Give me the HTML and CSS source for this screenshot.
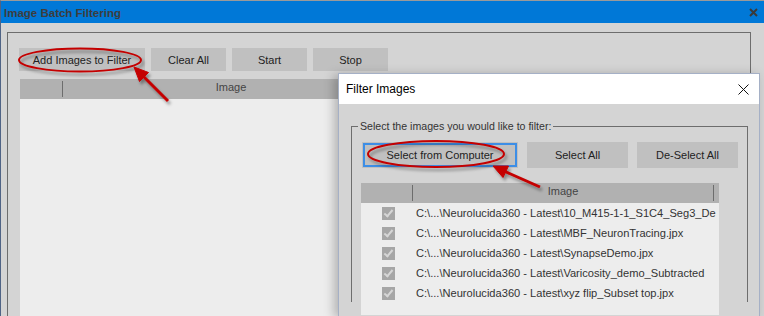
FILE: index.html
```html
<!DOCTYPE html>
<html lang="en">
<head>
    <meta charset="UTF-8">
    <title>Image Batch Filtering</title>
    <link rel="stylesheet" href="styles.css">
</head>
<body>
    <!-- Main window -->
    <div class="window">
        <div class="titlebar">
            <span class="title">Image Batch Filtering</span>
            <svg class="main-close" width="9" height="9" viewBox="0 0 9 9">
                <path d="M1 1L8 8M8 1L1 8" stroke="#3a3a3a" stroke-width="2"/>
            </svg>
        </div>
        <div class="client">
            <div class="group">
                <div class="btn-row">
                    <button class="btn btn-add">Add Images to Filter</button>
                    <button class="btn btn-small">Clear All</button>
                    <button class="btn btn-small">Start</button>
                    <button class="btn btn-small">Stop</button>
                </div>
                <div class="grid main-grid">
                    <div class="grid-head">
                        <div class="col-check"></div>
                        <div class="col-image">Image</div>
                    </div>
                    <div class="grid-body"></div>
                </div>
            </div>
        </div>
    </div>

    <!-- Filter Images dialog -->
    <div class="dialog">
        <div class="dialog-title">
            <span>Filter Images</span>
            <svg width="11" height="11" viewBox="0 0 11 11">
                <path d="M0.5 0.5L10.5 10.5M10.5 0.5L0.5 10.5" stroke="#111" stroke-width="1"/>
            </svg>
        </div>
        <div class="dialog-body">
            <fieldset class="dlg-group">
                <legend>Select the images you would like to filter:</legend>
                <div class="btn-row dlg-btns">
                    <button class="btn btn-select focused">Select from Computer</button>
                    <button class="btn btn-mid">Select All</button>
                    <button class="btn btn-mid">De-Select All</button>
                </div>
                <div class="grid dlg-grid">
                    <div class="grid-head">
                        <div class="col-check"></div>
                        <div class="col-image">Image</div>
                        <div class="col-rest"></div>
                    </div>
                    <div class="grid-body">
                        <div class="row"><span class="check"></span><span class="path">C:\...\Neurolucida360 - Latest\10_M415-1-1_S1C4_Seg3_De</span></div>
                        <div class="row"><span class="check"></span><span class="path">C:\...\Neurolucida360 - Latest\MBF_NeuronTracing.jpx</span></div>
                        <div class="row"><span class="check"></span><span class="path">C:\...\Neurolucida360 - Latest\SynapseDemo.jpx</span></div>
                        <div class="row"><span class="check"></span><span class="path">C:\...\Neurolucida360 - Latest\Varicosity_demo_Subtracted</span></div>
                        <div class="row"><span class="check"></span><span class="path">C:\...\Neurolucida360 - Latest\xyz flip_Subset top.jpx</span></div>
                    </div>
                </div>
            </fieldset>
        </div>
    </div>

    <!-- Red callouts drawn on top of the screenshot -->
    <svg class="callouts" width="764" height="316" viewBox="0 0 764 316">
        <defs>
            <filter id="shade" x="-20%" y="-20%" width="140%" height="160%">
                <feDropShadow dx="2" dy="3" stdDeviation="1.5" flood-color="#000" flood-opacity="0.35"/>
            </filter>
        </defs>
        <g filter="url(#shade)" fill="none" stroke="#c40000" stroke-width="2">
            <ellipse cx="80" cy="60" rx="61" ry="11.5"/>
            <ellipse cx="436" cy="154" rx="68" ry="13"/>
        </g>
        <g filter="url(#shade)" stroke="#c40000" stroke-width="3" fill="#c40000">
            <line x1="168" y1="101" x2="143" y2="76"/>
            <polygon points="134,67 148.5,72.5 139.5,81.5" stroke-width="1"/>
            <line x1="540" y1="187" x2="505" y2="171.5"/>
            <polygon points="493,166 508.5,166 503,177.5" stroke-width="1"/>
        </g>
    </svg>
</body>
</html>
```

FILE: styles.css
```css
body, html {
    margin: 0;
    padding: 0;
    width: 764px;
    height: 316px;
    overflow: hidden;
    font-family: "Liberation Sans", Arial, sans-serif;
    background-color: #d4d4d4;
}

.window {
    height: 315px;
    border-top: 1px solid #9a9a9a;
    border-left: 1px solid #4f6385;
}

.titlebar {
    height: 22px;
    background-color: #0078d7;
    display: flex;
    align-items: center;
    justify-content: space-between;
    padding: 0 6px 0 3px;
}

.title {
    font-size: 11.5px;
    font-weight: bold;
    color: #3d3d3d;
    padding-top: 1px;
}

.client {
    padding: 9px 0 0 6px;
}

.group {
    width: 742px;
    height: 283px;
    border: 1px solid #6d6d6d;
    border-bottom: none;
}

.btn-row {
    display: flex;
    gap: 6px;
    padding: 15px 0 0 11px;
}

.btn {
    height: 23px;
    border: none;
    padding: 0;
    background-color: #c0c0c0;
    font-family: "Liberation Sans", Arial, sans-serif;
    font-size: 11px;
    color: #222;
}

.btn-add {
    width: 126px;
}

.btn-small {
    width: 75px;
}

.grid {
    background-color: #ededed;
}

.main-grid {
    margin: 8px 0 0 12px;
    width: 718px;
    height: 237px;
}

.grid-head {
    height: 20px;
    background-color: #b1b1b1;
    display: flex;
    align-items: center;
    font-size: 11px;
    color: #444;
}

.grid-head .col-check {
    width: 42px;
    height: 16px;
    border-right: 1px solid #6d6d6d;
}

.grid-head .col-image {
    width: 336px;
    text-align: center;
    line-height: 16px;
    padding-bottom: 4px;
}

/* dialog */
.dialog {
    position: absolute;
    left: 338px;
    top: 73px;
    width: 420px;
    height: 242px;
    border: 1px solid #a5b0c6;
    border-bottom: none;
    background-color: #d4d4d4;
    box-shadow: -4px 2px 10px rgba(0, 0, 0, 0.25);
}

.dialog-title {
    height: 30px;
    background-color: #fff;
    display: flex;
    align-items: center;
    justify-content: space-between;
    padding: 0 10px 0 7px;
    font-size: 12px;
    color: #000;
}

.dialog-body {
    padding: 15px 11px 0 12px;
}

.dlg-group {
    margin: 0;
    padding: 0 0 0 10px;
    width: 385px;
    height: 182px;
    border: 1px solid #6d6d6d;
    border-bottom: none;
}

.dlg-group legend {
    margin-left: -4px;
    padding: 0 2px;
    font-size: 10.6px;
    line-height: 14px;
    color: #333;
}

.dlg-btns {
    padding: 9px 0 0 0;
    gap: 9px;
}

.dlg-btns .btn {
    height: 26px;
}

.btn-select {
    width: 156px;
}

.btn-mid {
    width: 101px;
}

.btn.focused {
    box-shadow: inset 0 0 0 1px #c0c0c0, inset 0 0 0 3px #3d8ee6;
}

.dlg-grid {
    margin: 15px 0 0 -1px;
    width: 358px;
    height: 132px;
}

.dlg-grid .col-check {
    width: 51px;
}

.dlg-grid .col-image {
    width: 300px;
}

.dlg-grid .col-rest {
    height: 16px;
    border-left: 1px solid #6d6d6d;
}

.row {
    height: 20px;
    display: flex;
    align-items: center;
    font-size: 11.1px;
    color: #333;
    white-space: nowrap;
}

.check {
    flex-shrink: 0;
    width: 13px;
    height: 13px;
    margin: 0 21px 0 21px;
    background-color: #a6a6a6;
    position: relative;
}

.check::after {
    content: "";
    position: absolute;
    left: 4px;
    top: 1px;
    width: 3px;
    height: 7px;
    border: solid #d6d6d6;
    border-width: 0 2px 2px 0;
    transform: rotate(40deg);
}

.callouts {
    position: absolute;
    left: 0;
    top: 0;
    pointer-events: none;
}
```
